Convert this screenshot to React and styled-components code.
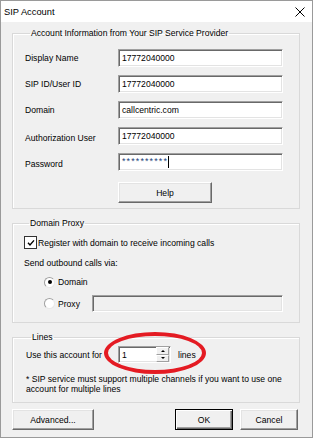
import React from 'react';
import styled, { createGlobalStyle } from 'styled-components';

const Global = createGlobalStyle`
  html, body { margin: 0; padding: 0; background: #fff; }
  body {
    font-family: "Liberation Sans", Arial, sans-serif;
    font-size: 8.6px;
    color: #000;
  }
  * { box-sizing: border-box; }
`;

const Window = styled.div`
  width: 313px;
  height: 438px;
  border: 1px solid #9a9a9a;
  background: #f0f0f0;
  display: flex;
  flex-direction: column;
`;

const TitleBar = styled.div`
  height: 21px;
  flex: none;
  background: #fff;
  display: flex;
  align-items: center;
  justify-content: space-between;
  padding: 0 7px 0 3px;
  font-size: 9.3px;
`;

const Body = styled.div`
  display: flex;
  flex-direction: column;
  padding: 0 12px 0 11px;
`;

const Group = styled.fieldset`
  margin: ${p => p.$mt}px 0 0;
  padding: ${p => p.$pad};
  border: 1px solid #d9d9d9;
  box-shadow: 1px 1px 0 #fff inset;
  min-width: 0;
  display: flex;
  flex-direction: column;
`;

const Legend = styled.legend`
  margin-left: 5px;
  padding: 0 1px;
  height: 12px;
  line-height: 12px;
`;

const Row = styled.div`
  display: flex;
  align-items: center;
  height: ${p => p.$h || 18}px;
  margin-top: ${p => p.$mt || 0}px;
  position: relative;
`;

const Label = styled.div`
  width: ${p => p.$w}px;
  flex: none;
  white-space: nowrap;
  padding-top: ${p => p.$drop || 0}px;
`;

const Field = styled.div`
  width: ${p => p.$w}px;
  height: ${p => p.$h || 18}px;
  flex: none;
  margin-left: ${p => (p.$auto ? 'auto' : '0')};
  background: ${p => (p.$disabled ? '#f0f0f0' : '#fff')};
  border: 1px solid;
  border-color: #a0a0a0 #fff #fff #a0a0a0;
  box-shadow: inset 1px 1px 0 #696969, inset -1px -1px 0 #e3e3e3;
  padding-left: 3px;
  display: flex;
  align-items: center;
  white-space: nowrap;
`;

const Stars = styled.span`
  font-size: 9px;
  letter-spacing: 1.1px;
  color: #1c3f7a;
  position: relative;
  top: -1px;
`;

const Caret = styled.span`
  display: inline-block;
  width: 1px;
  height: 12px;
  background: #000;
`;

const Button = styled.button`
  width: ${p => p.$w}px;
  height: 21px;
  flex: none;
  margin: 0;
  padding: 0;
  font: inherit;
  color: #000;
  background: #f0f0f0;
  border: 1px solid;
  border-color: ${p => (p.$default ? '#000' : '#fff #696969 #696969 #fff')};
  box-shadow: ${p =>
    p.$default
      ? 'inset 1px 1px 0 #fff, inset -1px -1px 0 #696969, inset -2px -2px 0 #a0a0a0'
      : 'inset -1px -1px 0 #a0a0a0, inset 1px 1px 0 #e3e3e3'};
  margin-left: ${p => p.$ml || 0}px;
`;

const CheckBox = styled.span`
  width: 13px;
  height: 13px;
  flex: none;
  border: 1px solid #333;
  background: #fff;
  display: flex;
  align-items: center;
  justify-content: center;
  margin-right: 1px;
`;

const Radio = styled.span`
  width: 11px;
  height: 11px;
  flex: none;
  border-radius: 50%;
  border: 1px solid #a0a0a0;
  border-right-color: #e8e8e8;
  border-bottom-color: #e8e8e8;
  background: #fff;
  display: flex;
  align-items: center;
  justify-content: center;
  margin: 0 3px 0 20px;
`;

const Dot = styled.span`
  width: 4px;
  height: 4px;
  border-radius: 50%;
  background: #000;
`;

const RadioText = styled.span`
  width: ${p => p.$w || 'auto'};
`;

const Text = styled.div`
  height: 11px;
  line-height: 11px;
  margin-top: ${p => p.$mt || 0}px;
  white-space: nowrap;
`;

const Spin = styled(Field)`
  justify-content: space-between;
  padding-right: 1px;
`;

const SpinButtons = styled.div`
  width: 13px;
  height: 15px;
  display: flex;
  flex-direction: column;
`;

const SpinButton = styled.div`
  flex: 1;
  background: #f0f0f0;
  border: 1px solid;
  border-color: #fff #a0a0a0 #a0a0a0 #fff;
  display: flex;
  align-items: center;
  justify-content: center;
`;

const Arrow = styled.span`
  width: 0;
  height: 0;
  border-left: 2px solid transparent;
  border-right: 2px solid transparent;
  ${p => (p.$up ? 'border-bottom: 2px solid #000;' : 'border-top: 2px solid #000;')}
`;

const After = styled.span`
  margin-left: 7px;
`;

const Ring = styled.div`
  position: absolute;
  left: 78px;
  top: -14px;
  width: 102px;
  height: 42px;
  border: 4.5px solid #e41b23;
  border-radius: 50%;
  pointer-events: none;
`;

const Note = styled.div`
  margin-top: 11px;
  line-height: 10px;
  white-space: nowrap;
`;

const Footer = styled.div`
  display: flex;
  margin-top: 6px;
  padding-right: 2px;
`;

const Spacer = styled.div`
  flex: 1;
`;

const CloseIcon = () => (
  <svg width="10" height="10" viewBox="0 0 10 10">
    <path d="M0.5 0.5 L9.5 9.5 M9.5 0.5 L0.5 9.5" stroke="#000" strokeWidth="1" />
  </svg>
);

const Check = () => (
  <svg width="8" height="8" viewBox="0 0 8 8">
    <path d="M1 3.8 L3 6 L7 1.4" stroke="#000" strokeWidth="1.4" fill="none" />
  </svg>
);

const accountRows = [
  { label: 'Display Name', value: '17772040000' },
  { label: 'SIP ID/User ID', value: '17772040000' },
  { label: 'Domain', value: 'callcentric.com' },
  { label: 'Authorization User', value: '17772040000', drop: 3 },
];

export default function App() {
  return (
    <>
      <Global />
      <Window>
        <TitleBar>
          <span>SIP Account</span>
          <CloseIcon />
        </TitleBar>
        <Body>
          <Group $mt={5} $pad="10px 16px 5px 12px">
            <Legend>Account Information from Your SIP Service Provider</Legend>
            {accountRows.map((r, i) => (
              <Row key={r.label} $mt={i === 0 ? 0 : 8}>
                <Label $w={93} $drop={r.drop}>{r.label}</Label>
                <Field $w={165}>{r.value}</Field>
              </Row>
            ))}
            <Row $mt={8}>
              <Label $w={93} $drop={3}>Password</Label>
              <Field $w={165}>
                <Stars>**********</Stars>
                <Caret />
              </Field>
            </Row>
            <Row $h={21} $mt={11}>
              <Label $w={93} />
              <Button $w={94}>Help</Button>
            </Row>
          </Group>

          <Group $mt={8} $pad="7px 16px 10px 11px">
            <Legend>Domain Proxy</Legend>
            <Row $h={13}>
              <CheckBox><Check /></CheckBox>
              <span>Register with domain to receive incoming calls</span>
            </Row>
            <Text $mt={9}>Send outbound calls via:</Text>
            <Row $h={12} $mt={7}>
              <Radio><Dot /></Radio>
              <RadioText>Domain</RadioText>
            </Row>
            <Row $h={17} $mt={7}>
              <Radio />
              <RadioText>Proxy</RadioText>
              <Field $w={191} $h={17} $auto $disabled />
            </Row>
          </Group>

          <Group $mt={8} $pad="3px 16px 8px 13px">
            <Legend>Lines</Legend>
            <Row $h={17}>
              <Label $w={92}>Use this account for</Label>
              <Spin $w={53} $h={17}>
                <span>1</span>
                <SpinButtons>
                  <SpinButton><Arrow $up /></SpinButton>
                  <SpinButton><Arrow /></SpinButton>
                </SpinButtons>
              </Spin>
              <After>lines</After>
              <Ring />
            </Row>
            <Note>
              * SIP service must support multiple channels if you want to use one
              <br />
              account for multiple lines
            </Note>
          </Group>

          <Footer>
            <Button $w={82}>Advanced...</Button>
            <Spacer />
            <Button $w={58} $default>OK</Button>
            <Button $w={58} $ml={7}>Cancel</Button>
          </Footer>
        </Body>
      </Window>
    </>
  );
}
